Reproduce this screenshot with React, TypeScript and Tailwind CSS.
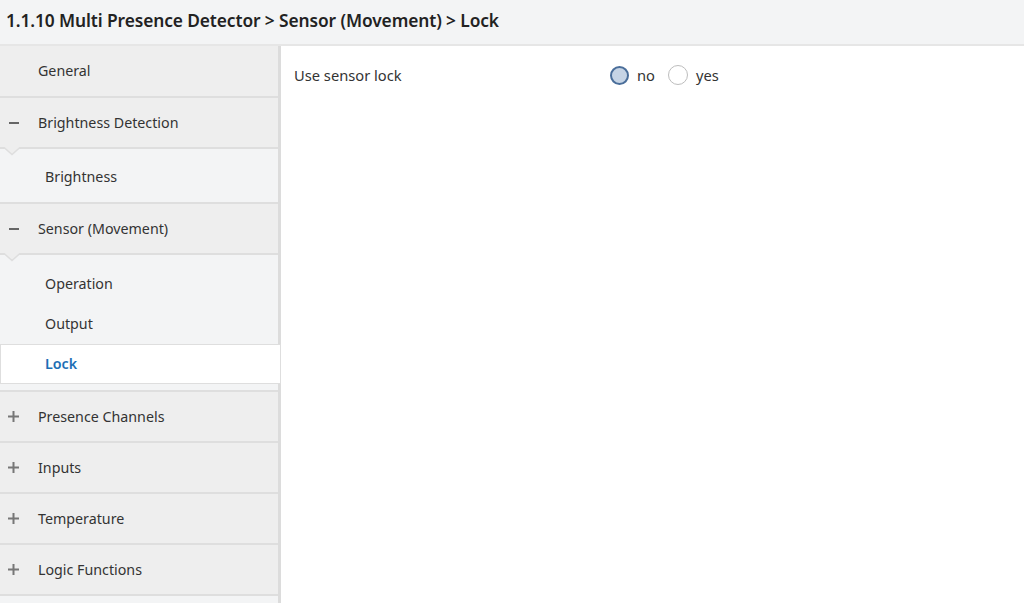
import React from "react";

const font = { fontFamily: '"Noto Sans", "Open Sans", sans-serif' };

function GroupHeader({ label, icon, expanded }: { label: string; icon: "+" | "-"; expanded?: boolean }) {
  return (
    <div className="relative h-[51px] flex items-center bg-[#eeeeee] border-b-2 border-[#dedede] text-[14.25px] text-[#333]">
      <div className="w-[26px] flex justify-center items-center">
        {icon === "-" ? (
          <div className="w-[10px] h-[2px] bg-[#666] ml-[1px]" />
        ) : (
          <svg width="11" height="11" viewBox="0 0 11 11" className="ml-[1px]">
            <rect x="4.5" y="0" width="2" height="11" fill="#777" />
            <rect x="0" y="4.5" width="11" height="2" fill="#777" />
          </svg>
        )}
      </div>
      <span className="ml-[12px]">{label}</span>
      {expanded && (
        <svg width="24" height="9" viewBox="0 0 24 9" className="absolute left-0 top-[49px] z-10">
          <path d="M0 0 L4 0 L12 7 L20 0 L24 0 L24 -1 L0 -1 Z" fill="#eeeeee" />
          <path d="M0 0.5 L4 0.5 L12 7.5 L20 0.5 L24 0.5" fill="#eeeeee" stroke="#dedede" strokeWidth="1.5" />
        </svg>
      )}
    </div>
  );
}

function SubItem({ label, active }: { label: string; active?: boolean }) {
  if (active) {
    return (
      <div className="h-[40px] flex items-center bg-white border border-[#dedede] mr-[-3px] relative z-10 text-[14.25px] font-semibold text-[#1c6fb5]">
        <span className="ml-[44px]">{label}</span>
      </div>
    );
  }
  return (
    <div className="h-[40px] flex items-center text-[14.25px] text-[#333]">
      <span className="ml-[45px]">{label}</span>
    </div>
  );
}

export default function App() {
  return (
    <div className="w-[1024px] h-[603px] overflow-hidden bg-white flex flex-col" style={font}>
      <div className="h-[46px] shrink-0 bg-[#f3f4f5] border-b-2 border-[#e6e6e6] flex items-center px-[6px] pb-[3px]">
        <span className="text-[17.35px] font-semibold text-[#222] tracking-[-0.1px]">
          1.1.10 Multi Presence Detector &gt; Sensor (Movement) &gt; Lock
        </span>
      </div>
      <div className="flex flex-1 min-h-0">
        <div className="w-[281px] shrink-0 border-r-[3px] border-[#dcdcdc] bg-[#eeeeee] flex flex-col">
          <div className="h-[52px] flex items-center bg-[#eeeeee] border-b-2 border-[#dedede] text-[14.25px] text-[#333]">
            <span className="ml-[38px]">General</span>
          </div>
          <GroupHeader label="Brightness Detection" icon="-" expanded />
          <div className="bg-[#f3f4f5] pt-[8px] pb-[5px] border-b-2 border-[#dedede]">
            <SubItem label="Brightness" />
          </div>
          <GroupHeader label="Sensor (Movement)" icon="-" expanded />
          <div className="bg-[#f3f4f5] pt-[9px] pb-[6px] border-b-2 border-[#dedede]">
            <SubItem label="Operation" />
            <SubItem label="Output" />
            <SubItem label="Lock" active />
          </div>
          <GroupHeader label="Presence Channels" icon="+" />
          <GroupHeader label="Inputs" icon="+" />
          <GroupHeader label="Temperature" icon="+" />
          <GroupHeader label="Logic Functions" icon="+" />
          <div className="flex-1 bg-[#f3f4f5]" />
        </div>
        <div className="flex-1 pl-[13px] pt-[19px]">
          <div className="flex items-center h-[20px] text-[14.7px] text-[#333]">
            <span className="w-[316px]">Use sensor lock</span>
            <label className="flex items-center">
              <span className="w-[19px] h-[19px] rounded-full border-2 border-[#4a6e9a] bg-[#c6d4e5] inline-block" />
              <span className="ml-[8px]">no</span>
            </label>
            <label className="flex items-center ml-[13px]">
              <span className="w-[20px] h-[20px] rounded-full border border-[#bdbdbd] bg-white inline-block" />
              <span className="ml-[8px]">yes</span>
            </label>
          </div>
        </div>
      </div>
    </div>
  );
}
